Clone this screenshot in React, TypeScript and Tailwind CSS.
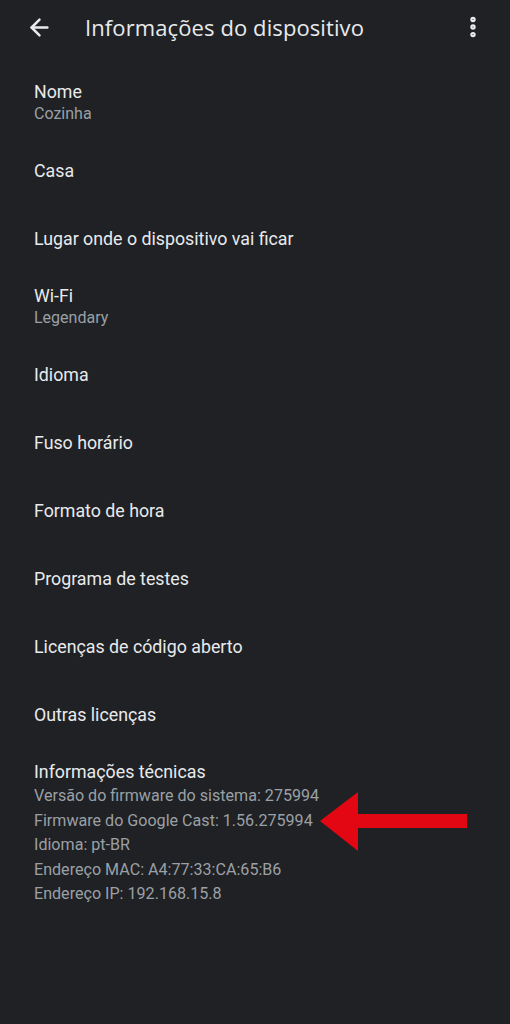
import { ArrowLeft, EllipsisVertical } from "lucide-react";

const rows: { title: string; sub?: string }[] = [
  { title: "Nome", sub: "Cozinha" },
  { title: "Casa" },
  { title: "Lugar onde o dispositivo vai ficar" },
  { title: "Wi-Fi", sub: "Legendary" },
  { title: "Idioma" },
  { title: "Fuso horário" },
  { title: "Formato de hora" },
  { title: "Programa de testes" },
  { title: "Licenças de código aberto" },
  { title: "Outras licenças" },
];

const tech = [
  "Versão do firmware do sistema: 275994",
  "Firmware do Google Cast: 1.56.275994",
  "Idioma: pt-BR",
  "Endereço MAC: A4:77:33:CA:65:B6",
  "Endereço IP: 192.168.15.8",
];

export default function App() {
  return (
    <div
      className="relative w-[510px] h-[1024px] bg-[#202124] text-[#e8eaed] overflow-hidden"
      style={{ fontFamily: "Roboto, 'Noto Sans', sans-serif" }}
    >
      {/* Top bar */}
      <header className="flex items-center h-[54px] pl-[26px] pr-[24px]">
        <ArrowLeft size={27} strokeWidth={2.2} className="text-[#e8eaed]" />
        <h1 className="ml-[32px] text-[22px] tracking-[0.1px] text-[#e8eaed] flex-1 font-['Open_Sans',Roboto,sans-serif]">
          Informações do dispositivo
        </h1>
        <EllipsisVertical size={26} strokeWidth={3} className="text-[#e8eaed]" />
      </header>

      <div className="mt-[15px]">
        {rows.map((r) => (
          <div key={r.title} className="h-[68px] flex flex-col justify-center px-[34px]">
            <div className="text-[17.8px] leading-[22px] text-[#e8eaed]">{r.title}</div>
            {r.sub && (
              <div className="text-[16px] leading-[22px] text-[#9aa0a6]">{r.sub}</div>
            )}
          </div>
        ))}

        {/* Informações técnicas */}
        <div className="px-[34px] pt-[11px]">
          <div className="text-[17.8px] leading-[24px] text-[#e8eaed]">Informações técnicas</div>
          {tech.map((t) => (
            <div key={t} className="text-[16.1px] leading-[24.5px] text-[#9aa0a6]">
              {t}
            </div>
          ))}
        </div>
      </div>

      {/* red annotation arrow */}
      <svg
        className="absolute left-[318px] top-[790px]"
        width="152"
        height="64"
        viewBox="318 790 152 64"
      >
        <polygon
          points="320,821 358,792 358,814 467,814 467,828 358,828 358,851"
          fill="#e30613"
        />
      </svg>
    </div>
  );
}
